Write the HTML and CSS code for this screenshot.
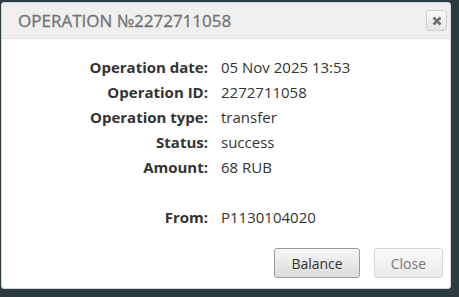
FILE: index.html
```html
<!DOCTYPE html>
<html lang="en">

<head>
    <meta charset="UTF-8">
    <title>Operation</title>
    <link rel="stylesheet" href="styles.css">
</head>

<body>
    <div class="dialog">
        <div class="dialog-head">
            <span class="dialog-title">Operation №2272711058</span>
            <button class="dialog-x" title="Close">
                <svg width="10" height="10" viewBox="0 0 10 10">
                    <path d="M1.5 1.5 L8.5 8.5 M8.5 1.5 L1.5 8.5" stroke="#6f6f6f" stroke-width="2.6" />
                </svg>
            </button>
        </div>

        <ul class="details">
            <li><span class="label">Operation date:</span><span class="value">05 Nov 2025 13:53</span></li>
            <li><span class="label">Operation ID:</span><span class="value">2272711058</span></li>
            <li><span class="label">Operation type:</span><span class="value">transfer</span></li>
            <li><span class="label">Status:</span><span class="value">success</span></li>
            <li><span class="label">Amount:</span><span class="value">68 RUB</span></li>
            <li class="blank"></li>
            <li><span class="label">From:</span><span class="value">P1130104020</span></li>
        </ul>

        <div class="dialog-foot">
            <button class="btn btn-main">Balance</button>
            <button class="btn">Close</button>
        </div>
    </div>
</body>

</html>
```

FILE: styles.css
```css
body {
    margin: 0;
    background: #2c3a42;
    font-family: "Open Sans", "DejaVu Sans", sans-serif;
}

.dialog {
    width: 450px;
    height: 287px;
    margin: 2px 0 0 1px;
    background: #fff;
    border-radius: 3px;
    box-sizing: border-box;
    border: 1px solid #d4d4d4;
    display: flex;
    flex-direction: column;
    overflow: hidden;
}

.dialog-head {
    height: 35px;
    background: #efefef;
    border-bottom: 1px solid #e2e2e2;
    display: flex;
    align-items: center;
    justify-content: space-between;
    padding: 0 3px 0 16px;
}

.dialog-title {
    font-size: 17px;
    color: #727272;
    text-transform: uppercase;
    letter-spacing: 0;
    -webkit-text-stroke: .3px #727272;
}

.dialog-x {
    width: 21px;
    height: 21px;
    padding: 0;
    border: 1px solid #cfcfcf;
    border-radius: 3px;
    background: linear-gradient(#f8f8f8, #e6e6e6);
    display: flex;
    align-items: center;
    justify-content: center;
}

.details {
    list-style: none;
    margin: 0;
    padding: 16px 0 0;
    flex: 1;
}

.details li {
    display: grid;
    grid-template-columns: 206px 1fr;
    column-gap: 13px;
    height: 25px;
    line-height: 25px;
    font-size: 15px;
}

.details .label {
    text-align: right;
    font-weight: 700;
    color: #333;
}

.details .value {
    color: #333;
}

.dialog-foot {
    display: flex;
    justify-content: flex-end;
    gap: 14px;
    padding: 0 7px 10px;
}

.btn {
    height: 30px;
    padding: 0 16px;
    font: 14px "Open Sans", "DejaVu Sans", sans-serif;
    color: #777;
    border: 1px solid #d6d6d6;
    border-radius: 3px;
    background: linear-gradient(#fbfbfb, #e9e9e9);
}

.btn-main {
    padding: 0 16px;
    color: #333;
    border-color: #9a9a9a;
    background: linear-gradient(#f6f6f6, #dcdcdc);
}
```
